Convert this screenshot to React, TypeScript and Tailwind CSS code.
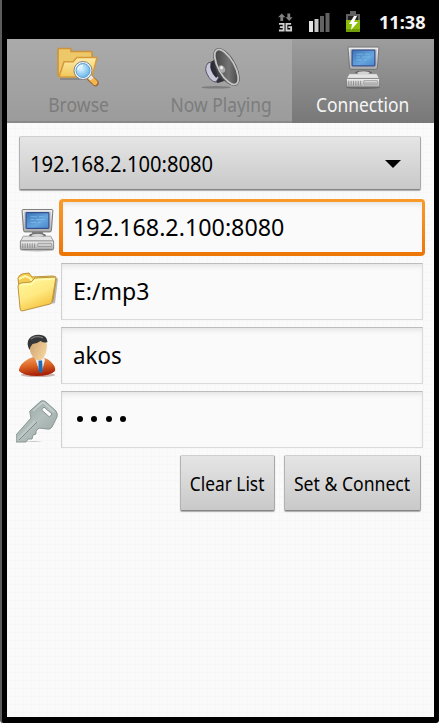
import type { ReactNode } from "react";

function ComputerIcon({ className }: { className: string }) {
  return (
    <svg viewBox="0 0 40 46" className={className} aria-hidden="true">
      <defs>
        <linearGradient id="case" x1="0" y1="0" x2="0" y2="1">
          <stop offset="0" stopColor="#f4f4f4" />
          <stop offset="1" stopColor="#a9a9a9" />
        </linearGradient>
        <linearGradient id="screen" x1="0" y1="0" x2="1" y2="1">
          <stop offset="0" stopColor="#3b73b8" />
          <stop offset="0.6" stopColor="#66a5de" />
          <stop offset="1" stopColor="#4a86cb" />
        </linearGradient>
      </defs>
      <ellipse cx="20" cy="44" rx="18" ry="1.6" fill="#000" opacity="0.25" />
      <path d="M15 24h11l1 6H14z" fill="#858585" />
      <ellipse cx="20.500" cy="28.500" rx="9" ry="2.200" fill="#5f5f5f" />
      <path d="M5.500 29.500h29l3 5.500h-35z" fill="#e4e4e4" stroke="#8b8b8b" strokeWidth="0.8" />
      <ellipse cx="20.500" cy="28.700" rx="6.500" ry="1.700" fill="#d4d4d4" />
      <rect x="2.500" y="34.500" width="35" height="9" rx="1" fill="url(#case)" stroke="#777" strokeWidth="0.900" />
      <path d="M5 37v5M7.500 37v5M10 37v5M12.500 37v5M15 37v5M17.500 37v5" stroke="#8d8d8d" strokeWidth="1" />
      <path d="M21 37h14v3.200H21z" fill="#f5f5f5" stroke="#888" strokeWidth="0.900" />
      <path d="M22 38.700h12" stroke="#929292" strokeWidth="0.700" />
      <path d="M5.200 1.500h30.600q1 0 .9 1l-1.500 21q-.1 1.500-1.600 1.500H7.400q-1.500 0-1.600-1.500L4.300 2.500q-.1-1 .9-1z" fill="url(#case)" stroke="#727272" />
      <path d="M7 4h27l-1 17H8z" fill="#dadada" stroke="#aaa" strokeWidth="0.600" />
      <rect x="8.500" y="4.800" width="24" height="16.400" rx="0.800" fill="url(#screen)" stroke="#344f91" strokeWidth="1.300" />
      <path d="M13 9h7M22 9h5M13 12h4M19 12h9M13 15h6M21 15h3" stroke="#91d1ed" strokeWidth="1" opacity="0.550" />
    </svg>
  );
}

function BrowseIcon() {
  return (
    <svg viewBox="0 0 44 42" className="mt-[2px] h-[42px] w-[44px]" aria-hidden="true">
      <defs>
        <linearGradient id="browse" x1="0" y1="0" x2="0" y2="1">
          <stop offset="0" stopColor="#ffebaa" />
          <stop offset="1" stopColor="#efc758" />
        </linearGradient>
        <radialGradient id="lens" cx="0.35" cy="0.35" r="0.7">
          <stop offset="0" stopColor="#e2f5ff" />
          <stop offset="1" stopColor="#65b5e9" />
        </radialGradient>
      </defs>
      <path d="M4 31h25v2H4z" fill="#555" opacity="0.35" />
      <path d="M2 3q0-1.500 1.500-1.500h10.200q1.300 0 1.300 1.500v1.500h20q1 0 1 1V29H3q-1 0-1-1z" fill="#edc869" stroke="#ce933a" strokeWidth="1.600" />
      <path d="m3 30 5-15.200h9l4-4.300h20L36 30z" fill="url(#browse)" stroke="#d49a3c" strokeWidth="1.500" strokeLinejoin="round" />
      <path d="m34 31 5.500 5" stroke="#9a673b" strokeWidth="6.500" strokeLinecap="round" />
      <path d="m34 30.500 5 5" stroke="#f5b74b" strokeWidth="5" strokeLinecap="round" />
      <path d="m33.500 29.500 2.500 2.500" stroke="#e6e8e9" strokeWidth="4" />
      <circle cx="27" cy="23.500" r="9" fill="#f2f6f8" stroke="#7f858b" />
      <circle cx="27" cy="23.500" r="7" fill="url(#lens)" stroke="#64a1ce" />
      <path d="M22 23q0-4 5-4.500" fill="none" stroke="#e9f8ff" strokeWidth="1.500" />
    </svg>
  );
}

function SpeakerIcon() {
  return (
    <svg viewBox="0 0 42 44" className="h-[44px] w-[42px]" aria-hidden="true">
      <defs>
        <linearGradient id="cone" x1="0.2" y1="0" x2="0.9" y2="1">
          <stop offset="0" stopColor="#3c3c3c" />
          <stop offset="0.55" stopColor="#747474" />
          <stop offset="1" stopColor="#3a3a3a" />
        </linearGradient>
      </defs>
      <ellipse cx="16" cy="42.300" rx="15" ry="1.300" fill="#626262" opacity="0.600" />
      <path d="M14 15 9 18q-3 4 0 11t9 9l6-2-7-20z" fill="#303137" />
      <path d="M8 18q-4 5-1 11 4 8 9 8l3-5q-5-2-7-8-1-3-1-7z" fill="#c9c7da" stroke="#57566a" />
      <path d="M12 18q-2 7 5 14" fill="none" stroke="#292b34" strokeWidth="2.500" />
      <path d="M15 20 16 4 37 38 31 40 18 32z" fill="#42434a" />
      <ellipse cx="26.500" cy="22" rx="9" ry="20.500" transform="rotate(-29 26.500 22)" fill="#505050" stroke="#555" strokeWidth="1" />
      <ellipse cx="26.500" cy="22" rx="8" ry="19.500" transform="rotate(-29 26.500 22)" fill="url(#cone)" stroke="#c6c6c6" strokeWidth="1.800" />
      <ellipse cx="22" cy="24" rx="2.800" ry="4" transform="rotate(-30 22 24)" fill="#aaa" />
      <ellipse cx="21.500" cy="22.800" rx="1.500" ry="1.800" fill="#eee" />
    </svg>
  );
}

function FolderIcon() {
  return (
    <svg viewBox="0 0 42 42" className="mt-[2px] h-[42px] w-[42px]" aria-hidden="true">
      <defs>
        <linearGradient id="folder" x1="0.2" y1="0" x2="0.7" y2="1">
          <stop offset="0" stopColor="#fff799" />
          <stop offset="0.5" stopColor="#ffe982" />
          <stop offset="1" stopColor="#f3bc32" />
        </linearGradient>
      </defs>
      <path d="m6 40 33-8 3-24-3-2z" fill="#555" opacity="0.400" />
      <path d="M2 7q1-3 4-4l7-1 3 4 21-1q3 0 3 3l-3 22L5 37z" fill="#f4cb52" stroke="#bd9336" />
      <path d="m3 8 6-3 5 2 2 3 21-3" fill="none" stroke="#fff8aa" strokeWidth="2" />
      <path d="M2 15q0-2 3-3l10-1 4-4 21-1-4 24q0 2-2 3L6 40q-2 0-2-3z" fill="url(#folder)" stroke="#bd9640" />
      <path d="M4 14q7-1 12-1l4-4 18-1" fill="none" stroke="#fffbb5" strokeWidth="1.300" />
    </svg>
  );
}

function PersonIcon() {
  return (
    <svg viewBox="0 0 40 44" className="mt-[2px] h-[44px] w-[40px]" aria-hidden="true">
      <defs>
        <linearGradient id="jacket" x1="0" y1="0" x2="0.2" y2="1">
          <stop offset="0" stopColor="#f3a064" />
          <stop offset="0.5" stopColor="#dc6725" />
          <stop offset="1" stopColor="#a82007" />
        </linearGradient>
        <linearGradient id="skin" x1="0" y1="0" x2="1" y2="0.6">
          <stop offset="0" stopColor="#c99c68" />
          <stop offset="1" stopColor="#f3d29c" />
        </linearGradient>
      </defs>
      <ellipse cx="20" cy="41" rx="17" ry="2" fill="#77281d" opacity="0.350" />
      <path d="M1 37q0-5 5-9 3-3 9-5h9q7 2 10 6 4 4 3 8-5 5-18 5T1 37z" fill="url(#jacket)" />
      <path d="m17 24 5 2 4-3 1 3-3 11-3-1z" fill="#e6edf5" />
      <path d="m20.500 26.500 3.500 0 .8 10-1.800 3-2.500-3z" fill="#1f6ab5" />
      <path d="M10.500 8q1-4 9-4 8 0 9.500 7 0 7-3 12-3 3.500-5 3.500-6-1-8.500-8z" fill="url(#skin)" />
      <path d="M11.500 16Q8 9 11 5q4-5 12-4 6 1 6.500 7-3 1.500-7-1-4 3-8 3-2 2-3 6z" fill="#353637" />
      <path d="M13 5q5-4 12-1" fill="none" stroke="#77797a" strokeWidth="1.300" />
    </svg>
  );
}

function KeyIcon() {
  return (
    <svg viewBox="0 0 42 44" className="mt-[4px] h-[44px] w-[42px]" aria-hidden="true">
      <defs>
        <linearGradient id="key" x1="0" y1="0" x2="1" y2="1">
          <stop offset="0" stopColor="#8c9c9a" />
          <stop offset="0.5" stopColor="#b3bfbd" />
          <stop offset="1" stopColor="#94a3a1" />
        </linearGradient>
      </defs>
      <path d="M1 43h26l-8-1z" fill="#888" opacity="0.450" />
      <path d="m15 11 10-9q3-1 5 1l10 9q2 3 1 6l-5 10q-2 3-5 2l-8-1-3 3v3l-3 1-1 4-4 0-2 3H0v-7l15-17-1-5q-1-2 1-3z" fill="url(#key)" stroke="#899795" />
      <path d="m17 12 9-8q2-1 3 1l9 8" fill="none" stroke="#c7d0ce" strokeWidth="1.500" />
      <path d="m2 39 16-18 2 2L4 41z" fill="#bfc8c6" />
      <path d="m3 41 18-18" stroke="#7e8b89" strokeWidth="1" />
      <path d="m28 8 8 7-2.500 3-8-7z" fill="#fafafa" stroke="#84918f" />
    </svg>
  );
}

function StatusBar() {
  return (
    <header className="flex h-[39px] shrink-0 items-end bg-black pr-[7px] pb-[5px]">
      <div className="ml-auto flex items-center">
        <svg viewBox="0 0 16 22" className="mr-[15px] h-[22px] w-[15px]" aria-hidden="true">
          <path d="m4 2 4 4H5.500v4h-3V6H0zM10 2h3v4h2.500L12 10 8 6h2z" fill="#808080" />
          <path d="M1 13h5v7H1M2 16.500h4M14 13H9v7h5v-3.500h-3" fill="none" stroke="#d0d0d0" strokeWidth="2" />
        </svg>
        <svg viewBox="0 0 22 22" className="mr-[15px] h-[22px] w-[22px]" aria-hidden="true">
          <path d="M1 10h4v11H1z" fill="#e5e5e5" />
          <path d="M6.500 8h4v13h-4z" fill="#c8c8c8" />
          <path d="M12 5h4v16h-4zM17.500 2h4v19h-4z" fill="#626262" />
        </svg>
        <svg viewBox="0 0 16 22" className="mr-[18px] h-[22px] w-[16px]" aria-hidden="true">
          <path d="M5 0h6v3h4v18H1V3h4z" fill="#626262" />
          <path d="M3 5h10v4H3z" fill="#202020" />
          <path d="M1 9h14v12H1z" fill="#8cbd09" />
          <path d="M1 18h14v3H1z" fill="#729f08" />
          <path d="m9 5-5 8h3l-1 6 7-8H9l3-6z" fill="#fff" />
        </svg>
        <time className="w-[48px] text-[18.500px] leading-[24px] font-bold whitespace-nowrap text-[#f4f4f4]">
          <span className="inline-block origin-left scale-x-[0.980]">11:38</span>
        </time>
      </div>
    </header>
  );
}

function Tab({ children, icon, active = false }: { children: ReactNode; icon: ReactNode; active?: boolean }) {
  return (
    <button
      role="tab"
      aria-selected={active}
      className={
        active
          ? "flex h-full w-[142px] flex-col items-center bg-linear-to-b from-[#9d9d9d] to-[#787878] pt-[6px] text-[#f5f5f5]"
          : "flex h-full w-[142.500px] flex-col items-center border-b-2 border-[#898989] bg-linear-to-b from-[#aaaaaa] to-[#9c9c9c] pt-[6px] text-[#7c7c7c]"
      }
    >
      <span className="flex h-[46px] items-start">{icon}</span>
      <span className="text-[20px] leading-[28px] whitespace-nowrap">{children}</span>
    </button>
  );
}

function Field({ icon, children, focused = false }: { icon: ReactNode; children: ReactNode; focused?: boolean }) {
  return (
    <div className="flex h-16 items-center">
      <div className="flex w-[54px] shrink-0 pl-[9px]">{icon}</div>
      <div
        className={
          focused
            ? "-mr-0.5 -ml-0.5 h-[57px] flex-1 rounded-[4px] bg-linear-to-b from-[#f99b2b] to-[#ec7606] p-[3.500px]"
            : "h-[57px] flex-1 border border-t-[#bdbdbd] border-r-[#dadada] border-b-[#dadada] border-l-[#d0d0d0] bg-[#fafafa] shadow-[inset_0_4px_5px_-2px_#e2e2e2]"
        }
      >
        <div
          className={
            focused
              ? "flex h-full items-center bg-[#fafafa] pl-[10px] text-[24px] shadow-[inset_0_4px_5px_-2px_#e2e2e2]"
              : "flex h-full items-center pl-[11px] text-[24px]"
          }
        >
          {children}
        </div>
      </div>
    </div>
  );
}

const buttonStyle =
  "flex items-center rounded-[2px] border border-t-[#cfcfcf] border-r-[#a8a8a8] border-b-[#858585] border-l-[#b2b2b2] bg-linear-to-b from-[#e5e5e5] to-[#c9c9c9] shadow-[0_1px_1px_#aaa]";

export default function App() {
  return (
    <div className="h-[723px] w-[439px] overflow-hidden rounded-b-[3px] border-l-2 border-[#5c5c5c] bg-black font-['Noto_Sans',sans-serif] text-black">
      <main className="ml-[5px] flex h-[717px] w-[427px] flex-col bg-[#fafafa] bg-[linear-gradient(to_right,#f7f7f7_1px,transparent_1px),linear-gradient(to_bottom,#f7f7f7_1px,transparent_1px)] bg-size-[8px_8px]">
        <StatusBar />
        <nav className="flex h-[84px] shrink-0" role="tablist">
          <Tab icon={<BrowseIcon />}>
            <span className="inline-block scale-x-[0.880]">Browse</span>
          </Tab>
          <Tab icon={<SpeakerIcon />}>
            <span className="inline-block scale-x-[0.870]">Now Playing</span>
          </Tab>
          <Tab active icon={<ComputerIcon className="h-[45px] w-[38px]" />}>
            <span className="inline-block scale-x-[0.870]">Connection</span>
          </Tab>
        </nav>

        <button className={`${buttonStyle} mt-[13px] ml-[12px] h-[54px] w-[402px] shrink-0 justify-between pr-[19px] pl-[9.500px] text-[21px]`}>
          <span className="origin-left translate-y-[1.500px] scale-x-[0.960]">192.168.2.100:8080</span>
          <span className="mt-[2px] h-0 w-0 border-x-8 border-t-8 border-x-transparent border-t-black" />
        </button>

        <section className="mt-[5px] mr-[11px]">
          <Field focused icon={<ComputerIcon className="mt-[5px] ml-[2px] h-[46px] w-[38px]" />}>
            <span className="origin-left scale-x-[0.970]">192.168.2.100:8080</span>
          </Field>
          <Field icon={<FolderIcon />}>
            <span className="origin-left scale-x-[0.960]">E:/mp3</span>
          </Field>
          <Field icon={<span className="ml-[2px]"><PersonIcon /></span>}>
            <span className="origin-left scale-x-[0.930]">akos</span>
          </Field>
          <Field icon={<KeyIcon />}>
            <span className="flex gap-[8.300px] pl-[4px]" aria-label="Password">
              {[0, 1, 2, 3].map((dot) => (
                <span key={dot} className="h-[6px] w-[6px] rounded-full bg-black" />
              ))}
            </span>
          </Field>
        </section>

        <div className="mt-[4px] mr-[13px] flex justify-end gap-[9px] text-[20px]">
          <button className={`${buttonStyle} h-[56px] w-[95px] justify-center whitespace-nowrap`}>
            <span className="translate-y-[0.500px] scale-x-[0.865]">Clear List</span>
          </button>
          <button className={`${buttonStyle} h-[56px] w-[137px] justify-center whitespace-nowrap`}>
            <span className="translate-y-[0.500px] scale-x-[0.880]">Set &amp; Connect</span>
          </button>
        </div>
      </main>
    </div>
  );
}
